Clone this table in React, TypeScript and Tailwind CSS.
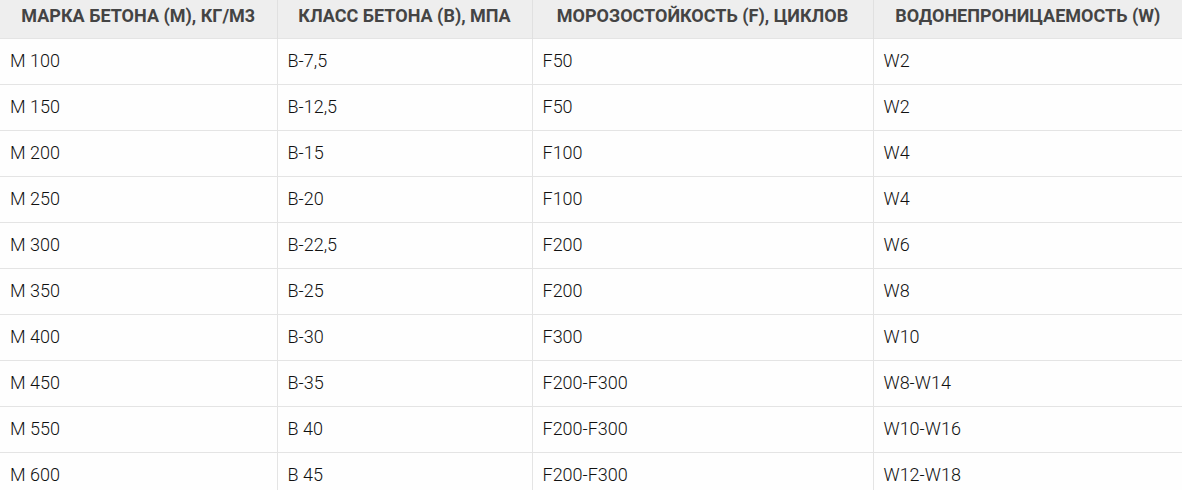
const rows = [
  ["М 100", "В-7,5", "F50", "W2"],
  ["М 150", "В-12,5", "F50", "W2"],
  ["М 200", "В-15", "F100", "W4"],
  ["М 250", "В-20", "F100", "W4"],
  ["М 300", "В-22,5", "F200", "W6"],
  ["М 350", "В-25", "F200", "W8"],
  ["М 400", "В-30", "F300", "W10"],
  ["М 450", "В-35", "F200-F300", "W8-W14"],
  ["М 550", "В 40", "F200-F300", "W10-W16"],
  ["М 600", "В 45", "F200-F300", "W12-W18"],
];

const heads = [
  "Марка бетона (М), кг/м3",
  "Класс бетона (В), МПа",
  "Морозостойкость (F), циклов",
  "Водонепроницаемость (W)",
];

export default function App() {
  return (
    <div className="w-[1182px] h-[490px] overflow-hidden bg-white font-['Roboto',sans-serif]">
      <table className="w-full border-collapse table-fixed text-[18px]">
        <colgroup>
          <col className="w-[277px]" />
          <col className="w-[255px]" />
          <col className="w-[341px]" />
          <col />
        </colgroup>
        <thead>
          <tr className="bg-[#eeeeee] h-[38px]">
            {heads.map((h, i) => (
              <th
                key={h}
                className={`uppercase font-bold text-[#444444] text-center align-middle leading-none pb-[5px] ${i > 0 ? "border-l border-[#e0e0e0]" : ""}`}
              >
                {h}
              </th>
            ))}
          </tr>
        </thead>
        <tbody>
          {rows.map((r) => (
            <tr key={r[0]} className="h-[46px] bg-[#fefefe] border-t border-[#e4e4e4]">
              {r.map((c, i) => (
                <td
                  key={i}
                  className={`px-[10px] font-light text-[#111111] align-middle leading-none ${i > 0 ? "border-l border-[#e4e4e4]" : ""}`}
                >
                  {c}
                </td>
              ))}
            </tr>
          ))}
        </tbody>
      </table>
    </div>
  );
}
